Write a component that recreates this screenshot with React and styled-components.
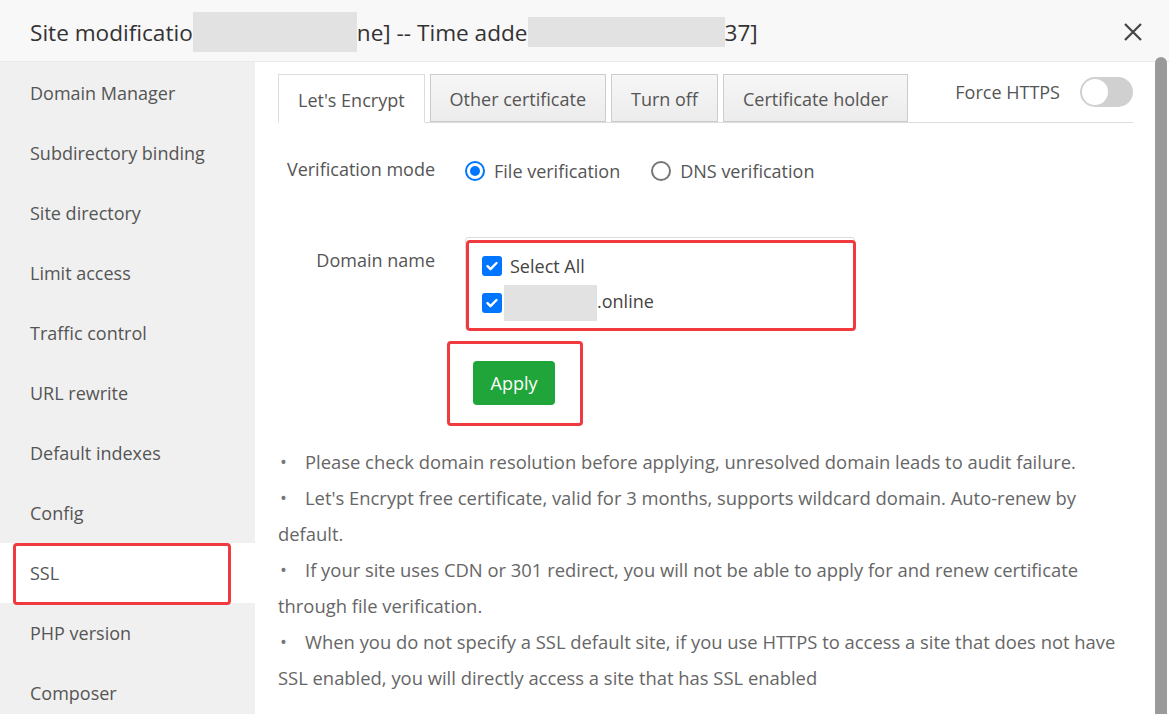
import React, { useState } from "react";
import styled, { createGlobalStyle } from "styled-components";

const GlobalStyle = createGlobalStyle`
  html, body { margin: 0; padding: 0; background: #fff; }
  body { font-family: "Open Sans", "Noto Sans", sans-serif; }
  * { box-sizing: border-box; }
`;

const Dialog = styled.div`
  width: 1169px;
  height: 714px;
  display: flex;
  flex-direction: column;
  overflow: hidden;
  background: #fff;
`;

const Header = styled.div`
  height: 62px;
  flex: none;
  display: flex;
  align-items: center;
  justify-content: space-between;
  padding: 3px 24px 0 30px;
  background: #f8f8f8;
  border-bottom: 1px solid #eaeaea;
`;

const Title = styled.div`
  font-size: 22.6px;
  color: #333;
  display: flex;
  align-items: center;
  white-space: nowrap;
`;

const Redact = styled.span`
  display: inline-block;
  width: ${({ w }) => w}px;
  height: ${({ h }) => h || 40}px;
  background: #e2e2e2;
  margin: 0 ${({ mr }) => mr || 0}px 0 ${({ ml }) => ml || 0}px;
  vertical-align: middle;
`;

const Close = styled.button`
  border: 0;
  background: none;
  padding: 0;
  width: 24px;
  height: 24px;
  cursor: pointer;
  display: flex;
  align-items: center;
  justify-content: center;
`;

const Body = styled.div`
  flex: 1;
  display: flex;
  min-height: 0;
`;

const Sidebar = styled.div`
  width: 255px;
  flex: none;
  background: #f0f0f0;
  padding-top: 1px;
`;

const NavItem = styled.div`
  position: relative;
  height: 60px;
  display: flex;
  align-items: center;
  padding-left: 30px;
  font-size: 18px;
  color: #555;
  background: ${({ active }) => (active ? "#fff" : "transparent")};
`;

const Mark = styled.div`
  position: absolute;
  left: ${({ l }) => l}px;
  top: ${({ t }) => t}px;
  right: ${({ r }) => r}px;
  bottom: ${({ b }) => b}px;
  border: 3px solid #ef3a3f;
  border-radius: 4px;
  pointer-events: none;
`;

const Main = styled.div`
  flex: 1;
  display: flex;
  min-width: 0;
`;

const Content = styled.div`
  flex: 1;
  padding: 12px 22px 0 23px;
`;

const Scrollbar = styled.div`
  width: 12px;
  flex: none;
  margin: -5px 2px 0 0;
  background: #9a9a9a;
  border-radius: 6px 6px 0 0;
`;

const TabBar = styled.div`
  display: flex;
  align-items: flex-end;
  gap: 5px;
  border-bottom: 1px solid #ddd;
  height: 49px;
`;

const Tab = styled.div`
  height: ${({ active }) => (active ? 49 : 48)}px;
  margin-bottom: ${({ active }) => (active ? -1 : 0)}px;
  padding: 2px 19px 0;
  display: flex;
  align-items: center;
  font-size: 18px;
  color: #555;
  border: 1px solid ${({ active }) => (active ? "#ddd" : "#ccc")};
  border-bottom: ${({ active }) => (active ? "1px solid #fff" : "1px solid #ccc")};
  background: ${({ active }) =>
    active ? "#fff" : "linear-gradient(#f6f6f6, #ececec)"};
`;

const Spacer = styled.div`
  flex: 1;
`;

const ForceWrap = styled.div`
  align-self: stretch;
  display: flex;
  align-items: flex-start;
  gap: 20px;
  padding-top: 6px;
  font-size: 18px;
  color: #555;
`;

const Toggle = styled.div`
  width: 53px;
  height: 30px;
  border-radius: 15px;
  background: #d0d0d0;
  padding: 2px;
  margin-top: -3px;
  display: flex;
  justify-content: ${({ on }) => (on ? "flex-end" : "flex-start")};
`;

const Knob = styled.div`
  width: 26px;
  height: 26px;
  border-radius: 50%;
  background: #fff;
`;

const FormRow = styled.div`
  display: flex;
  align-items: ${({ top }) => (top ? "flex-start" : "center")};
  margin-top: ${({ mt }) => mt}px;
`;

const Label = styled.div`
  width: 157px;
  flex: none;
  text-align: right;
  font-size: 18px;
  color: #555;
  margin-top: ${({ mt }) => mt || 0}px;
`;

const Field = styled.div`
  margin-left: 30px;
  display: flex;
  align-items: center;
`;

const RadioOpt = styled.label`
  display: flex;
  align-items: center;
  gap: 9px;
  font-size: 18px;
  color: #555;
  margin-right: 31px;
  cursor: pointer;
`;

const RadioDot = styled.span`
  width: 20px;
  height: 20px;
  border-radius: 50%;
  border: 2px solid ${({ on }) => (on ? "#0075ff" : "#767676")};
  display: flex;
  align-items: center;
  justify-content: center;
  &::after {
    content: "";
    width: 10px;
    height: 10px;
    border-radius: 50%;
    background: ${({ on }) => (on ? "#0075ff" : "transparent")};
  }
`;

const ListBox = styled.div`
  position: relative;
  margin-left: 30px;
  width: 390px;
  height: 93px;
  border: 1px solid #ddd;
  border-radius: 3px;
  padding: 9px 0 0 16px;
`;

const CheckRow = styled.div`
  display: flex;
  align-items: center;
  gap: 8px;
  height: 37px;
  flex: none;
  font-size: 18px;
  color: #444;
`;

const Check = styled.span`
  width: 20px;
  height: 20px;
  border-radius: 3px;
  background: #0075ff;
  display: flex;
  align-items: center;
  justify-content: center;
  flex: none;
`;

const ApplyWrap = styled.div`
  position: relative;
  margin: 31px 0 0 195px;
  width: 82px;
`;

const ApplyButton = styled.button`
  display: block;
  width: 82px;
  height: 44px;
  border: 0;
  border-radius: 4px;
  background: #20a53a;
  color: #fff;
  font-family: inherit;
  font-size: 18px;
  cursor: pointer;
`;

const Notes = styled.ul`
  list-style: none;
  margin: 39px 0 0;
  padding: 0;
  font-size: 18.4px;
  line-height: 36px;
  color: #666;
`;

const Note = styled.li`
  &::before {
    content: "•";
    display: inline-block;
    width: 25px;
    padding-left: 2px;
    color: #777;
  }
`;

const navItems = [
  "Domain Manager",
  "Subdirectory binding",
  "Site directory",
  "Limit access",
  "Traffic control",
  "URL rewrite",
  "Default indexes",
  "Config",
  "SSL",
  "PHP version",
  "Composer",
];

const tabs = ["Let's Encrypt", "Other certificate", "Turn off", "Certificate holder"];

const notes = [
  "Please check domain resolution before applying, unresolved domain leads to audit failure.",
  "Let's Encrypt free certificate, valid for 3 months, supports wildcard domain. Auto-renew by default.",
  "If your site uses CDN or 301 redirect, you will not be able to apply for and renew certificate through file verification.",
  "When you do not specify a SSL default site, if you use HTTPS to access a site that does not have SSL enabled, you will directly access a site that has SSL enabled",
];

function CheckIcon() {
  return (
    <svg width="14" height="14" viewBox="0 0 14 14">
      <path d="M2.5 7.2l3 3 6-6.2" fill="none" stroke="#fff" strokeWidth="2.4" strokeLinecap="round" strokeLinejoin="round" />
    </svg>
  );
}

export default function App() {
  const [mode, setMode] = useState("file");
  const [active, setActive] = useState("SSL");

  return (
    <>
      <GlobalStyle />
      <Dialog>
        <Header>
          <Title>
            Site modificatio
            <Redact w={164} />
            ne] -- Time adde
            <Redact w={197} h={30} />
            37]
          </Title>
          <Close>
            <svg width="20" height="20" viewBox="0 0 20 20">
              <path d="M2 2l16 16M18 2L2 18" stroke="#444" strokeWidth="2.2" />
            </svg>
          </Close>
        </Header>
        <Body>
          <Sidebar>
            {navItems.map((n) => (
              <NavItem key={n} active={n === active} onClick={() => setActive(n)}>
                {n}
                {n === "SSL" && <Mark l={13} t={0} r={24} b={-2} />}
              </NavItem>
            ))}
          </Sidebar>
          <Main>
            <Content>
              <TabBar>
                {tabs.map((t, i) => (
                  <Tab key={t} active={i === 0}>
                    {t}
                  </Tab>
                ))}
                <Spacer />
                <ForceWrap>
                  Force HTTPS
                  <Toggle>
                    <Knob />
                  </Toggle>
                </ForceWrap>
              </TabBar>

              <FormRow mt={36}>
                <Label mt={-4}>Verification mode</Label>
                <Field>
                  <RadioOpt onClick={() => setMode("file")}>
                    <RadioDot on={mode === "file"} />
                    File verification
                  </RadioOpt>
                  <RadioOpt onClick={() => setMode("dns")}>
                    <RadioDot on={mode === "dns"} />
                    DNS verification
                  </RadioOpt>
                </Field>
              </FormRow>

              <FormRow top mt={54}>
                <Label mt={11}>Domain name</Label>
                <ListBox>
                  <CheckRow>
                    <Check>
                      <CheckIcon />
                    </Check>
                    Select All
                  </CheckRow>
                  <CheckRow>
                    <Check>
                      <CheckIcon />
                    </Check>
                    <span>
                      <Redact w={93} h={36} ml={-6} />
                      .online
                    </span>
                  </CheckRow>
                  <Mark l={0} t={2} r={-2} b={-2} />
                </ListBox>
              </FormRow>

              <ApplyWrap>
                <ApplyButton>Apply</ApplyButton>
                <Mark l={-26} t={-20} r={-28} b={-21} />
              </ApplyWrap>

              <Notes>
                {notes.map((n) => (
                  <Note key={n}>{n}</Note>
                ))}
              </Notes>
            </Content>
            <Scrollbar />
          </Main>
        </Body>
      </Dialog>
    </>
  );
}
